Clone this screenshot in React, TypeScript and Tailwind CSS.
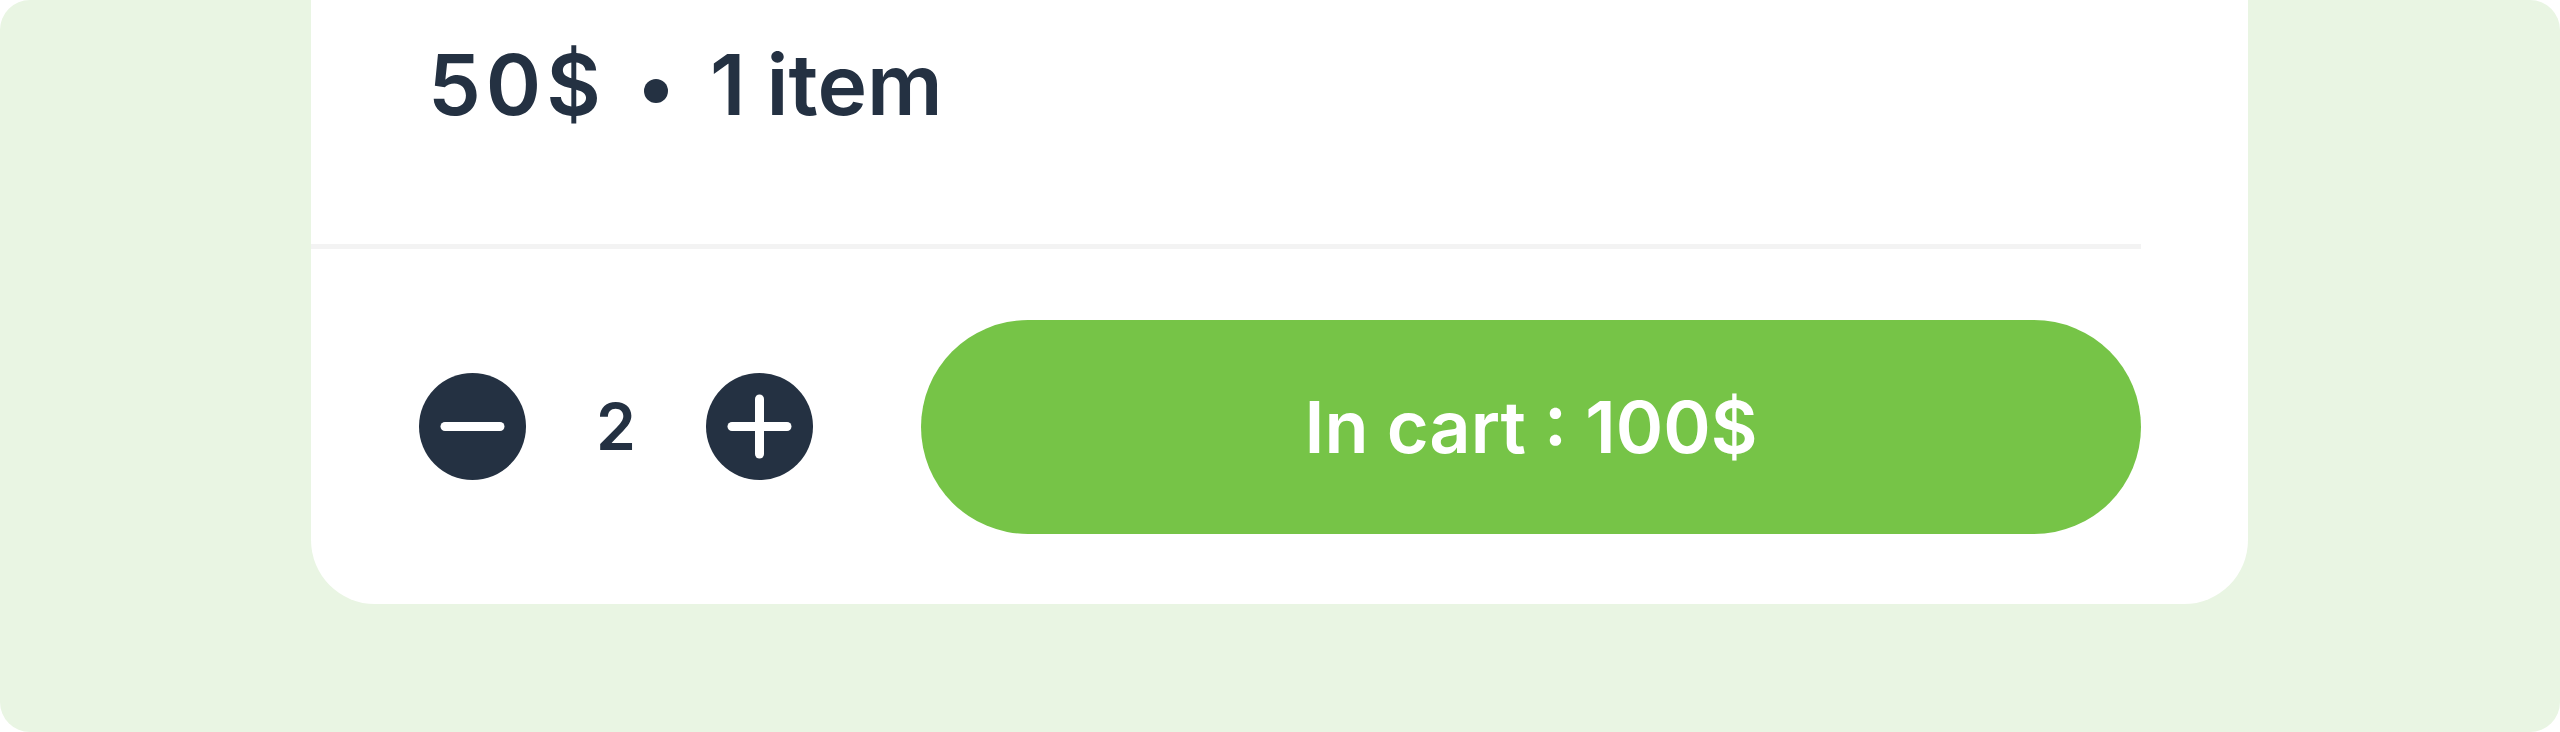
import React from 'react';

const MinusIcon: React.FC = () => (
    <svg width="107" height="107" viewBox="0 0 107 107">
        <circle cx="53.5" cy="53.5" r="53.5" fill="#243142" />
        <line x1="26" y1="53.5" x2="81" y2="53.5" stroke="#ffffff" strokeWidth="9" strokeLinecap="round" />
    </svg>
);

const PlusIcon: React.FC = () => (
    <svg width="107" height="107" viewBox="0 0 107 107">
        <circle cx="53.5" cy="53.5" r="53.5" fill="#243142" />
        <line x1="26" y1="53.5" x2="81" y2="53.5" stroke="#ffffff" strokeWidth="9" strokeLinecap="round" />
        <line x1="53.5" y1="26" x2="53.5" y2="81" stroke="#ffffff" strokeWidth="9" strokeLinecap="round" />
    </svg>
);

const App: React.FC = () => {
    const price = 50;
    const quantity = 2;

    return (
        <div className="w-[2560px] h-[732px] bg-[#e9f5e3] rounded-[30px] overflow-hidden font-['Inter',_sans-serif]">
            <div className="ml-[311px] w-[1937px] h-[604px] bg-white rounded-b-[64px] flex flex-col">
                {/* Summary */}
                <div className="h-[244px] pl-[117px]">
                    <div className="h-[170px] flex items-center text-[84px] leading-none font-semibold text-[#243142]">
                        <span className="tracking-[5px]">{price}$</span>
                        <span className="ml-[38px] mt-[12px] w-[24px] h-[24px] rounded-full bg-[#243142]"></span>
                        <span className="ml-[42px] whitespace-pre">1 item</span>
                    </div>
                </div>

                <div className="h-[5px] mr-[107px] bg-[#f3f3f3]"></div>

                {/* Quantity + cart */}
                <div className="flex-1 flex items-center pl-[108px] pr-[107px]">
                    <button className="shrink-0">
                        <MinusIcon />
                    </button>
                    <span className="w-[180px] text-center text-[64px] leading-none font-semibold text-[#243142]">
                        {quantity}
                    </span>
                    <button className="shrink-0">
                        <PlusIcon />
                    </button>
                    <button className="ml-[108px] flex-1 h-[214px] rounded-full bg-[#76c447] flex items-center justify-center">
                        <span className="text-[72px] leading-none font-semibold text-white whitespace-pre">
                            In cart : {price * quantity}$
                        </span>
                    </button>
                </div>
            </div>
        </div>
    );
};

export default App;
